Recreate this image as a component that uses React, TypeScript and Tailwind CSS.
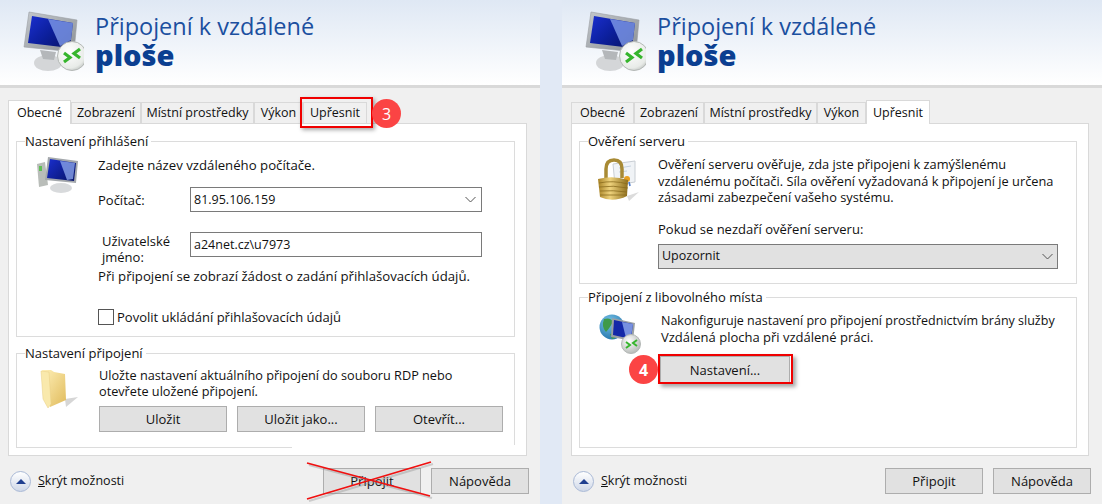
import React from 'react'

const tabs = [
  { label: 'Obecné', width: 'w-[63px]' },
  { label: 'Zobrazení', width: 'w-[70px]' },
  { label: 'Místní prostředky', width: 'w-[113px]' },
  { label: 'Výkon', width: 'w-[49px]' },
  { label: 'Upřesnit', width: 'w-[64px]' },
]

const BigMonitor = () => (
  <svg width="64" height="66" viewBox="18 6 64 66" className="shrink-0">
    <defs>
      <linearGradient id="bigBezel" x1="0" y1="0" x2="1" y2="1">
        <stop offset="0" stopColor="#c4c8cc" />
        <stop offset="1" stopColor="#8b9094" />
      </linearGradient>
      <linearGradient id="bigScreen" x1="0" y1="0" x2="1" y2="0.7">
        <stop offset="0" stopColor="#1a2fd0" />
        <stop offset="0.55" stopColor="#0c1f9c" />
        <stop offset="1" stopColor="#08156e" />
      </linearGradient>
      <radialGradient id="bigBadge" cx="0.4" cy="0.35" r="0.8">
        <stop offset="0" stopColor="#ffffff" />
        <stop offset="0.7" stopColor="#e8ebe8" />
        <stop offset="1" stopColor="#a8adaa" />
      </radialGradient>
    </defs>
    <ellipse cx="46" cy="61" rx="14" ry="8" fill="#d4d6d8" />
    <path d="M38 48 L54 50 L52 58 L41 57 Z" fill="#b4b7ba" />
    <path d="M27 10 L75 18 L72 50 L22 45 Z" fill="url(#bigBezel)" stroke="#9a9ea2" strokeWidth="0.6" />
    <path d="M30 14 L71 21 L68 46 L26 41 Z" fill="url(#bigScreen)" />
    <path d="M46 17 L71 21 L69 38 L58 44 Z" fill="#7f9bea" opacity="0.8" />
    <circle cx="70" cy="54" r="14.5" fill="url(#bigBadge)" stroke="#b4b8b6" strokeWidth="1" />
    <path d="M62 51 L68 55.5 L62 60" fill="none" stroke="#36b52d" strokeWidth="3.2" />
    <path d="M78 47 L72 51.5 L78 56" fill="none" stroke="#36b52d" strokeWidth="3.2" />
  </svg>
)

const SmallComputer = () => (
  <svg width="44" height="40" viewBox="0 0 44 40" className="shrink-0">
    <defs>
      <linearGradient id="smScreen" x1="0" y1="0" x2="1" y2="0.7">
        <stop offset="0" stopColor="#1a2fd0" />
        <stop offset="1" stopColor="#08156e" />
      </linearGradient>
    </defs>
    <path d="M1 9 L9 7 L12 30 L3 32 Z" fill="#b9bdb9" />
    <rect x="3" y="11" width="3" height="5" fill="#5fbf55" />
    <ellipse cx="25" cy="33" rx="11" ry="5" fill="#d8dadc" />
    <path d="M12 2 L42 6 L40 28 L9 25 Z" fill="#a4a8ac" />
    <path d="M14 4 L40 8 L38 26 L11 23 Z" fill="url(#smScreen)" />
    <path d="M24 6 L39 8 L37 24 L31 25 Z" fill="#88a2ea" opacity="0.8" />
  </svg>
)

const Folder = () => (
  <svg width="38" height="42" viewBox="0 0 38 42" className="shrink-0">
    <defs>
      <linearGradient id="folderBack" x1="0" y1="0" x2="1" y2="1">
        <stop offset="0" stopColor="#fff0b8" />
        <stop offset="1" stopColor="#e0bb5c" />
      </linearGradient>
    </defs>
    <path d="M25 30 L38 28 L26 38 Z" fill="#d6d6d6" />
    <path d="M2 1 L11 1 L14 3 L25 5 L26 31 L10 38 Z" fill="url(#folderBack)" />
    <path d="M1 2 L9 3 L11 35 L8 39 L3 30 Z" fill="#f9e9ac" stroke="#e8cf85" strokeWidth="0.5" />
  </svg>
)

const Lock = () => (
  <svg width="42" height="44" viewBox="0 0 42 44" className="shrink-0">
    <defs>
      <linearGradient id="lockBody" x1="0" y1="0" x2="1" y2="0">
        <stop offset="0" stopColor="#a88326" />
        <stop offset="0.4" stopColor="#eed27c" />
        <stop offset="1" stopColor="#8f6f1e" />
      </linearGradient>
    </defs>
    <path d="M16 6 L38 3 L38 24 L18 27 Z" fill="#f0f3f6" stroke="#c9ced4" strokeWidth="1" />
    <path d="M22 10 L34 8 M22 14 L30 13" stroke="#c5d2de" strokeWidth="1" />
    <circle cx="30" cy="21" r="3" fill="#e8a020" />
    <path d="M28 24 L27 29 M32 24 L33 28" stroke="#4a78c8" strokeWidth="1.6" />
    <path d="M30 38 L42 34 L32 43 Z" fill="#dcdcdc" />
    <path d="M9 20 L9 11 Q9 2 17 2 Q25 2 25 11 L25 20" fill="none" stroke="#a88a34" strokeWidth="3.5" />
    <path d="M1 21 Q16 17 31 22 L30 38 Q16 45 3 39 Z" fill="url(#lockBody)" />
    <path d="M2 25 Q16 22 31 26 M2 29 Q16 27 31 30 M3 33 Q16 32 30 34 M3 37 Q16 37 30 37" fill="none" stroke="#8a6c1e" strokeWidth="0.8" />
  </svg>
)

const GlobeMonitor = () => (
  <svg width="44" height="44" viewBox="0 0 44 44" className="shrink-0">
    <defs>
      <radialGradient id="globeFill" cx="0.4" cy="0.3" r="0.8">
        <stop offset="0" stopColor="#79c4e8" />
        <stop offset="1" stopColor="#1e6fa8" />
      </radialGradient>
      <radialGradient id="globeBadge" cx="0.4" cy="0.35" r="0.8">
        <stop offset="0" stopColor="#ffffff" />
        <stop offset="1" stopColor="#a8adaa" />
      </radialGradient>
    </defs>
    <circle cx="14" cy="16" r="12.5" fill="url(#globeFill)" />
    <path d="M6 8 Q13 6 15 11 Q11 18 8 21 Q3 16 6 8 M12 23 Q18 22 17 27 L14 28 Z" fill="#3f9a4a" />
    <path d="M14 7 L37 12 L35 30 L13 26 Z" fill="#9aa0a4" />
    <path d="M16 9 L35 13 L33 28 L15 24 Z" fill="#1428a8" />
    <path d="M24 11 L35 13 L33 26 L28 27 Z" fill="#88a2ea" opacity="0.85" />
    <circle cx="33" cy="33" r="9.5" fill="url(#globeBadge)" stroke="#b4b8b6" />
    <path d="M28 31 L32 34 L28 37" fill="none" stroke="#36b52d" strokeWidth="2" />
    <path d="M39 29 L35 32 L39 35" fill="none" stroke="#36b52d" strokeWidth="2" />
  </svg>
)

const Group = ({ title, className, children }: { title: string; className: string; children: React.ReactNode }) => (
  <fieldset className={`border border-[#dcdcdc] ${className}`}>
    <legend className="ml-[8px] pr-[3px] text-[#111] leading-[16px]">{title}</legend>
    {children}
  </fieldset>
)

const Btn = ({ label, className = '' }: { label: string; className?: string }) => (
  <button className={`h-[26px] bg-[#e1e1e1] border border-[#adadad] text-center text-[#111] ${className}`}>{label}</button>
)

const Chevron = () => (
  <svg width="11" height="7" viewBox="0 0 11 7" className="shrink-0">
    <path d="M0.5 1 L5.5 6 L10.5 1" fill="none" stroke="#555" strokeWidth="1" />
  </svg>
)

const Window = ({ active, offset, children, overlay }: { active: number; offset: string; children: React.ReactNode; overlay?: React.ReactNode }) => (
  <div className="w-[540px] h-[504px] bg-[#f0f0f0] flex flex-col relative shrink-0">
    <div className="h-[85px] box-content bg-gradient-to-b from-[#dfe8f4] to-white flex items-start pl-[20px] pt-0 border-b-[3px] border-[#d9d9d9] shrink-0">
      <div className="mt-[8px]"><BigMonitor /></div>
      <div className="ml-[11px] mt-[12px] text-[#1b4f9f]">
        <div className="text-[23.5px] leading-[28px]">Připojení k vzdálené</div>
        <div className="text-[29px] leading-[30px] font-extrabold text-[#0b3f91]">ploše</div>
      </div>
    </div>
    <div className={`flex items-end h-[23px] mt-[12px] text-[12.5px] ${offset}`}>
      {tabs.map((t, i) => (
        <div
          key={t.label}
          className={`${t.width} flex items-center justify-center border border-[#d9d9d9] text-[#111] ${i === active ? 'h-[24px] bg-white border-b-0 -mb-[1px] relative z-10' : 'h-[21px] border-b-0 bg-[#f0f0f0]'}`}
        >
          {t.label}
        </div>
      ))}
    </div>
    <div className={`${offset} mr-[13px]`}>
      <div className="h-[333px] bg-white border border-[#d9d9d9] pl-[7px] pr-[11px] pt-[9px] flex flex-col">
        {children}
      </div>
    </div>
    <div className={`flex items-center h-[26px] mt-[12px] pr-[11px] ${offset}`}>
      <div className="w-[21px] h-[21px] ml-[2px] rounded-full border border-[#a9b9d6] bg-gradient-to-b from-white to-[#cfd8e8] flex items-center justify-center">
        <div className="w-0 h-0 border-l-[5px] border-r-[5px] border-b-[5px] border-l-transparent border-r-transparent border-b-[#1f3f8f]" />
      </div>
      <div className="ml-[7px] text-[12.5px] text-[#111]"><span className="underline">S</span>krýt možnosti</div>
      <div className="ml-auto flex gap-[10px]">
        <Btn label="Připojit" className="w-[98px]" />
        <Btn label="Nápověda" className="w-[98px]" />
      </div>
    </div>
    {overlay}
  </div>
)

export default function App() {
  return (
    <div className="w-[1102px] h-[504px] overflow-hidden bg-[#e1e9f5] flex justify-between text-[13px] text-[#111] font-['Open_Sans','Noto_Sans',sans-serif] leading-[16px]">
      <Window
        active={0}
        offset="ml-[8px]"
        overlay={
          <>
            {/* red frame round the tab, with step badge */}
            <div className="absolute left-[300px] top-[97px] w-[73px] h-[31px] border-[2px] border-[#f00000] shadow-[2px_2px_4px_rgba(0,0,0,0.35)]" />
            <div className="absolute left-[372px] top-[99px] w-[29px] h-[29px] rounded-full bg-[#fb4444] text-white text-[16px] flex items-center justify-center">3</div>
            {/* crossed-out connect button */}
            <svg className="absolute left-[300px] top-[458px]" width="140" height="46" viewBox="0 0 140 46">
              <path d="M7 5 L130 38 M7 41 L131 4" stroke="#888" strokeWidth="2" opacity="0.35" transform="translate(2 2)" />
              <path d="M7 5 L130 38 M7 41 L131 4" stroke="#f01010" strokeWidth="1.8" />
            </svg>
            {/* scrap of white over the group border */}
            <div className="absolute left-[292px] top-[445px] w-[224px] h-[4px] bg-white" />
          </>
        }
      >
        <Group title="Nastavení přihlášení" className="h-[204px]">
          <div className="flex items-start pl-[19px]">
            <div className="mt-[6px]"><SmallComputer /></div>
            <div className="ml-[18px] flex-1 min-w-0">
              <div className="mt-[8px] text-[13.2px]">Zadejte název vzdáleného počítače.</div>
              <div className="flex items-center mt-[14px]">
                <div className="w-[92px]">Počítač:</div>
                <div className="w-[292px] h-[25px] border border-[#7a7a7a] flex items-center justify-between pl-[3px] pr-[5px] text-[12.5px]">
                  81.95.106.159
                  <Chevron />
                </div>
              </div>
              <div className="flex items-start mt-[20px]">
                <div className="w-[92px] pl-[4px] pt-[1px] leading-[16px]">Uživatelské<br />jméno:</div>
                <div className="w-[292px] h-[25px] border border-[#7a7a7a] flex items-center pl-[3px] text-[12.5px]">a24net.cz\u7973</div>
              </div>
              <div className="mt-[3px] text-[13.2px]">Při připojení se zobrazí žádost o zadání přihlašovacích údajů.</div>
              <div className="flex items-center mt-[25px]">
                <div className="w-[16px] h-[16px] border border-[#555] bg-white" />
                <div className="ml-[3px]">Povolit ukládání přihlašovacích údajů</div>
              </div>
            </div>
          </div>
        </Group>
        <Group title="Nastavení připojení" className="h-[103px] mt-[8px]">
          <div className="flex items-start pl-[23px]">
            <div className="mt-[8px]"><Folder /></div>
            <div className="ml-[21px]">
              <div className="mt-[6px] leading-[16px] w-[390px] text-[12.7px]">
                Uložte nastavení aktuálního připojení do souboru RDP nebo<br />otevřete uložené připojení.
              </div>
              <div className="flex gap-[10px] mt-[7px]">
                <Btn label="Uložit" className="w-[128px]" />
                <Btn label="Uložit jako..." className="w-[128px]" />
                <Btn label="Otevřít..." className="w-[128px]" />
              </div>
            </div>
          </div>
        </Group>
      </Window>
      <Window
        active={4}
        offset="ml-[9px]"
        overlay={
          <>
            <div className="absolute left-[96px] top-[354px] w-[135px] h-[30px] border-[2px] border-[#f00000] shadow-[3px_3px_4px_rgba(0,0,0,0.35)]" />
            <div className="absolute left-[67px] top-[355px] w-[29px] h-[29px] rounded-full bg-[#fb4444] text-white text-[16px] font-bold flex items-center justify-center">4</div>
          </>
        }
      >
        <Group title="Ověření serveru" className="h-[151px]">
          <div className="flex items-start pl-[17px]">
            <div className="mt-[9px]"><Lock /></div>
            <div className="ml-[19px]">
              <div className="mt-[7px] leading-[16.5px] whitespace-nowrap text-[12.8px]">
                Ověření serveru ověřuje, zda jste připojeni k zamýšlenému<br />
                vzdálenému počítači. Síla ověření vyžadovaná k připojení je určena<br />
                zásadami zabezpečení vašeho systému.
              </div>
              <div className="mt-[15px]">Pokud se nezdaří ověření serveru:</div>
              <div className="mt-[7px] w-[400px] h-[25px] border border-[#7a7a7a] bg-[#e1e1e1] flex items-center justify-between pl-[3px] pr-[4px] text-[12.5px]">
                Upozornit
                <Chevron />
              </div>
            </div>
          </div>
        </Group>
        <Group title="Připojení z libovolného místa" className="h-[159px] mt-[5px]">
          <div className="flex items-start pl-[18px]">
            <div className="mt-[6px]"><GlobeMonitor /></div>
            <div className="ml-[19px]">
              <div className="mt-[8px] whitespace-nowrap">
                <div className="text-[12.5px]">Nakonfiguruje nastavení pro připojení prostřednictvím brány služby</div>
                <div className="text-[13px]">Vzdálená plocha při vzdálené práci.</div>
              </div>
              <Btn label="Nastavení..." className="w-[130px] h-[27px] mt-[11px] -ml-[1px] border-[#888]" />
            </div>
          </div>
        </Group>
      </Window>
    </div>
  )
}
